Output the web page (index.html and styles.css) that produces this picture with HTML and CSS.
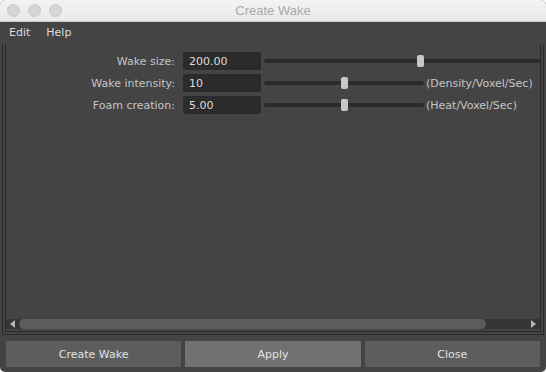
FILE: index.html
```html
<!DOCTYPE html>
<html>
<head>
<meta charset="utf-8">
<link rel="stylesheet" href="styles.css">
</head>
<body>
<div class="window">
  <div class="titlebar">
    <div class="lights">
      <span class="light"></span><span class="light"></span><span class="light"></span>
    </div>
    <div class="title">Create Wake</div>
  </div>
  <div class="menubar">
    <span class="menu">Edit</span>
    <span class="menu">Help</span>
  </div>
  <div class="body">
    <div class="panel">
      <div class="inner">
        <div class="form">
          <div class="row">
            <label class="label">Wake size:</label>
            <div class="field">200.00</div>
            <div class="slider wide"><div class="track"></div><div class="thumb" style="left:153px"></div></div>
          </div>
          <div class="row">
            <label class="label">Wake intensity:</label>
            <div class="field">10</div>
            <div class="slider"><div class="track"></div><div class="thumb" style="left:77px"></div></div>
            <span class="unit">(Density/Voxel/Sec)</span>
          </div>
          <div class="row">
            <label class="label">Foam creation:</label>
            <div class="field">5.00</div>
            <div class="slider"><div class="track"></div><div class="thumb" style="left:77px"></div></div>
            <span class="unit">(Heat/Voxel/Sec)</span>
          </div>
        </div>
        <div class="hscroll">
          <svg class="arrow" width="6" height="8" viewBox="0 0 6 8"><polygon points="5,0 5,8 0,4" fill="#b4b4b4"/></svg>
          <div class="sthumb"></div>
          <div class="sspace"></div>
          <svg class="arrow" width="6" height="8" viewBox="0 0 6 8"><polygon points="1,0 1,8 6,4" fill="#b4b4b4"/></svg>
        </div>
      </div>
    </div>
    <div class="buttons">
      <button class="btn">Create Wake</button>
      <button class="btn active">Apply</button>
      <button class="btn">Close</button>
    </div>
  </div>
</div>
</body>
</html>
```

FILE: styles.css
```css
html, body {
  margin: 0;
  padding: 0;
  background: #ffffff;
}
body {
  width: 546px;
  height: 372px;
  overflow: hidden;
  font-family: "DejaVu Sans", "Liberation Sans", sans-serif;
}
.window {
  width: 546px;
  height: 372px;
  display: flex;
  flex-direction: column;
  border-radius: 5px;
  overflow: hidden;
  background: #444444;
}
.titlebar {
  height: 21px;
  flex: none;
  display: flex;
  align-items: center;
  position: relative;
  background: linear-gradient(#f3f3f3, #e9e9e9);
  border-bottom: 1px solid #c9c9c9;
}
.lights {
  display: flex;
  gap: 8px;
  padding-left: 7px;
}
.light {
  width: 11px;
  height: 11px;
  border-radius: 50%;
  background: #d6d6d6;
  border: 0.5px solid #c8c8c8;
}
.title {
  position: absolute;
  left: 0;
  right: 0;
  top: 0;
  line-height: 21px;
  text-align: center;
  font-size: 13px;
  color: #aaaaaa;
  font-family: "Liberation Sans", sans-serif;
}
.menubar {
  height: 20px;
  flex: none;
  display: flex;
  align-items: center;
  gap: 16px;
  padding-left: 9px;
  font-size: 11px;
  color: #dcdcdc;
}
.body {
  flex: 1;
  display: flex;
  flex-direction: column;
  padding: 2px 2px 0 2px;
}
.panel {
  height: 288px;
  border-left: 1px solid #2b2b2b;
  border-right: 1px solid #2b2b2b;
  border-bottom: 1px solid #2b2b2b;
  padding: 0 2px 2px 2px;
}
.inner {
  height: 100%;
  box-sizing: border-box;
  border-left: 1px solid #2b2b2b;
  border-right: 1px solid #2b2b2b;
  border-bottom: 1px solid #2b2b2b;
  display: flex;
  flex-direction: column;
  overflow: hidden;
}
.form {
  flex: 1;
  padding-top: 8px;
  display: flex;
  flex-direction: column;
  gap: 4px;
}
.row {
  display: flex;
  align-items: center;
  height: 18px;
  font-size: 11px;
}
.label {
  width: 169px;
  flex: none;
  text-align: right;
  color: #c4c4c4;
  margin-right: 8px;
}
.field {
  width: 72px;
  flex: none;
  height: 18px;
  line-height: 19px;
  padding-left: 6px;
  background: #2b2b2b;
  border-radius: 2px;
  color: #dedede;
}
.slider {
  position: relative;
  width: 160px;
  height: 18px;
  margin-left: 3px;
  flex: none;
}
.slider.wide {
  width: 290px;
}
.track {
  position: absolute;
  left: 0;
  right: 0;
  top: 7px;
  height: 4px;
  border-radius: 2px;
  background: #2b2b2b;
}
.thumb {
  position: absolute;
  top: 3px;
  width: 7px;
  height: 12px;
  border-radius: 2px;
  background: #c8c8c8;
}
.unit {
  margin-left: 2px;
  color: #c4c4c4;
  white-space: nowrap;
}
.hscroll {
  height: 10px;
  margin-bottom: 2px;
  flex: none;
  display: flex;
  align-items: center;
  background: #353535;
  padding: 0 4px;
}
.sthumb {
  margin-left: 3px;
  width: 467px;
  height: 10px;
  border-radius: 5px;
  background: #5c5c5c;
}
.sspace {
  flex: 1;
}
.buttons {
  display: flex;
  gap: 4px;
  padding: 6px 4px 0 4px;
}
.btn {
  flex: 1;
  height: 26px;
  border: none;
  border-radius: 1px;
  background: #5d5d5d;
  color: #e2e2e2;
  font-family: "DejaVu Sans", "Liberation Sans", sans-serif;
  font-size: 11px;
  padding: 0;
}
.btn.active {
  background: #717171;
}
```
